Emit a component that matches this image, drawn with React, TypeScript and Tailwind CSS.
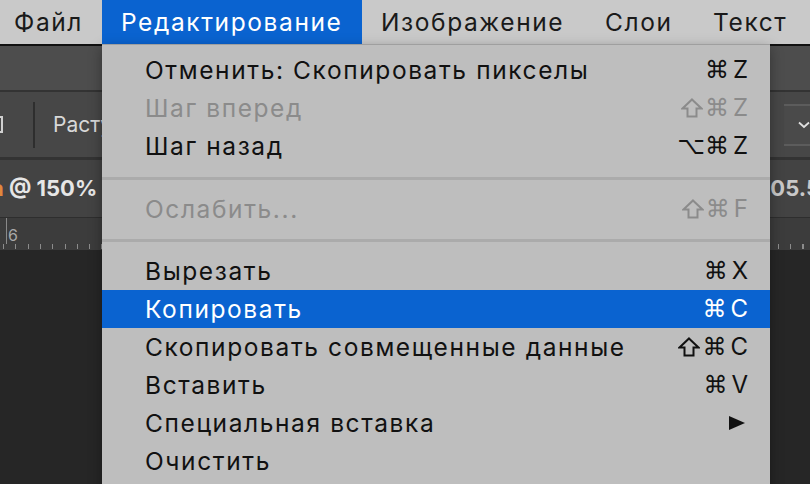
import React from "react";

const FONT = { fontFamily: 'Inter, "Liberation Sans", "DejaVu Sans", Arial, sans-serif' };

type Item =
  | { kind: "item"; label: string; sc?: string; disabled?: boolean; active?: boolean; sub?: boolean }
  | { kind: "sep"; h: string };

const items: Item[] = [
  { kind: "item", label: "Отменить: Скопировать пикселы", sc: "⌘Z" },
  { kind: "item", label: "Шаг вперед", sc: "⇧⌘Z", disabled: true },
  { kind: "item", label: "Шаг назад", sc: "⌥⌘Z" },
  { kind: "sep", h: "a" },
  { kind: "item", label: "Ослабить...", sc: "⇧⌘F", disabled: true },
  { kind: "sep", h: "b" },
  { kind: "item", label: "Вырезать", sc: "⌘X" },
  { kind: "item", label: "Копировать", sc: "⌘C", active: true },
  { kind: "item", label: "Скопировать совмещенные данные", sc: "⇧⌘C" },
  { kind: "item", label: "Вставить", sc: "⌘V" },
  { kind: "item", label: "Специальная вставка", sub: true },
  { kind: "item", label: "Очистить" },
];

function ShiftIcon() {
  return (
    <svg width="22" height="20" viewBox="0 0 22 20" className="mr-[2px]">
      <path d="M11 1.5 L20.5 10.5 L15.5 10.5 L15.5 18.5 L6.5 18.5 L6.5 10.5 L1.5 10.5 Z" stroke="currentColor" strokeWidth="2" fill="none" strokeLinejoin="miter" />
    </svg>
  );
}

function Shortcut({ sc, cls }: { sc: string; cls: string }) {
  const chars = Array.from(sc);
  return (
    <span className={"flex items-center text-[24px] " + cls} style={{ fontFamily: '"DejaVu Sans", "Liberation Sans", sans-serif' }}>
      {chars.map((c, i) => {
        if (c === "⇧") return <ShiftIcon key={i} />;
        const last = i === chars.length - 1;
        return (
          <span key={i} className={last ? "ml-[4px]" : ""} style={last ? FONT : undefined}>
            {c}
          </span>
        );
      })}
    </span>
  );
}

export default function App() {
  return (
    <div className="relative w-[810px] h-[484px] overflow-hidden bg-[#262626]" style={FONT}>
      {/* Menubar */}
      <div className="flex h-[44px] bg-[#c9c9c9] text-[24.5px] tracking-[1.6px] text-[#1a1a1a]">
        <div className="w-[102px] pl-[14px] flex items-center">Файл</div>
        <div className="w-[260px] pl-[19px] flex items-center bg-[#0a63d0] text-white">Редактирование</div>
        <div className="w-[224px] pl-[19px] flex items-center">Изображение</div>
        <div className="w-[108px] pl-[19px] flex items-center">Слои</div>
        <div className="w-[116px] pl-[19px] flex items-center">Текст</div>
      </div>

      {/* Background application */}
      <div className="flex flex-col h-[440px]">
        <div className="h-[2px] bg-[#111]" />
        <div className="h-[44px] bg-[#4d4d4d]" />
        <div className="h-[2px] bg-[#333]" />
        <div className="h-[65px] bg-[#474747] flex items-center justify-between">
          <div className="flex items-center h-full">
            <div className="ml-[-6px] w-[9px] h-[17px] border-2 border-l-0 border-[#d0d0d0]" />
            <div className="ml-[30px] w-[2px] h-[46px] bg-[#2e2e2e]" />
            <div className="ml-[18px] text-[21px] text-[#d8d8d8]">Растушевка: 0 пикс.</div>
          </div>
          <div className="h-[42px] w-[40px] mr-[-14px] border-y-2 border-[#5c5c5c] bg-[#4a4a4a] flex items-center justify-center">
            <svg width="12" height="8" viewBox="0 0 12 8">
              <path d="M1 1.5 L6 6 L11 1.5" stroke="#e0e0e0" strokeWidth="1.8" fill="none" />
            </svg>
          </div>
        </div>
        <div className="h-[3px] bg-[#333]" />
        <div className="h-[57px] bg-[#434343] flex items-center justify-between font-bold text-[22px] text-[#e6e6e6]">
          <div className="ml-[-9px]">
            <span className="text-[#e0883c]">а</span> @ 150%
          </div>
          <div className="mr-[-10px] text-[#c8c8c8]">105.5</div>
        </div>
        <div className="h-[1px] bg-[#2e2e2e]" />
        <div className="h-[32px] bg-[#3c3c3c] flex flex-col">
          <div className="flex-1 flex">
            <div className="ml-[6px] w-[1px] bg-[#8a8a8a]" />
            <div className="ml-[1px] mt-[9px] text-[16px] leading-[16px] text-[#a8a8a8]">6</div>
          </div>
          <div className="h-[5px] mb-[1px] bg-[repeating-linear-gradient(90deg,transparent_0_3px,#8c8c8c_3px_4px,transparent_4px_12.3px)]" />
        </div>
        <div className="flex-1 bg-[#262626]" />
      </div>

      {/* Dropdown menu */}
      <div className="absolute left-[102px] top-[44px] w-[668px] h-[460px] bg-[#bebebe] border-t border-[#9f9f9f] pt-[6px] shadow-[0_4px_12px_rgba(0,0,0,0.35)]">
        {items.map((it, i) => {
          if (it.kind === "sep") {
            return (
              <div key={i} className={it.h === "a" ? "pt-[12px] pb-[10px]" : "pt-[11px] pb-[10px]"}>
                <div className="h-[3px] bg-[#ababab]" />
              </div>
            );
          }
          const color = it.active ? "text-white" : it.disabled ? "text-[#8b8b8b]" : "text-[#111]";
          return (
            <div
              key={i}
              className={"h-[38px] flex items-center justify-between pl-[43px] pr-[22px] text-[24.5px] " + color + (it.active ? " bg-[#0a63d0]" : "")}
            >
              <span className="tracking-[1.6px]">{it.label}</span>
              {it.sc && <Shortcut sc={it.sc} cls={color} />}
              {it.sub && (
                <svg width="18" height="16" viewBox="0 0 18 16" className="mr-[2px]">
                  <path d="M1 1 L17 8 L1 15 Z" fill="#111" />
                </svg>
              )}
            </div>
          );
        })}
      </div>
    </div>
  );
}
